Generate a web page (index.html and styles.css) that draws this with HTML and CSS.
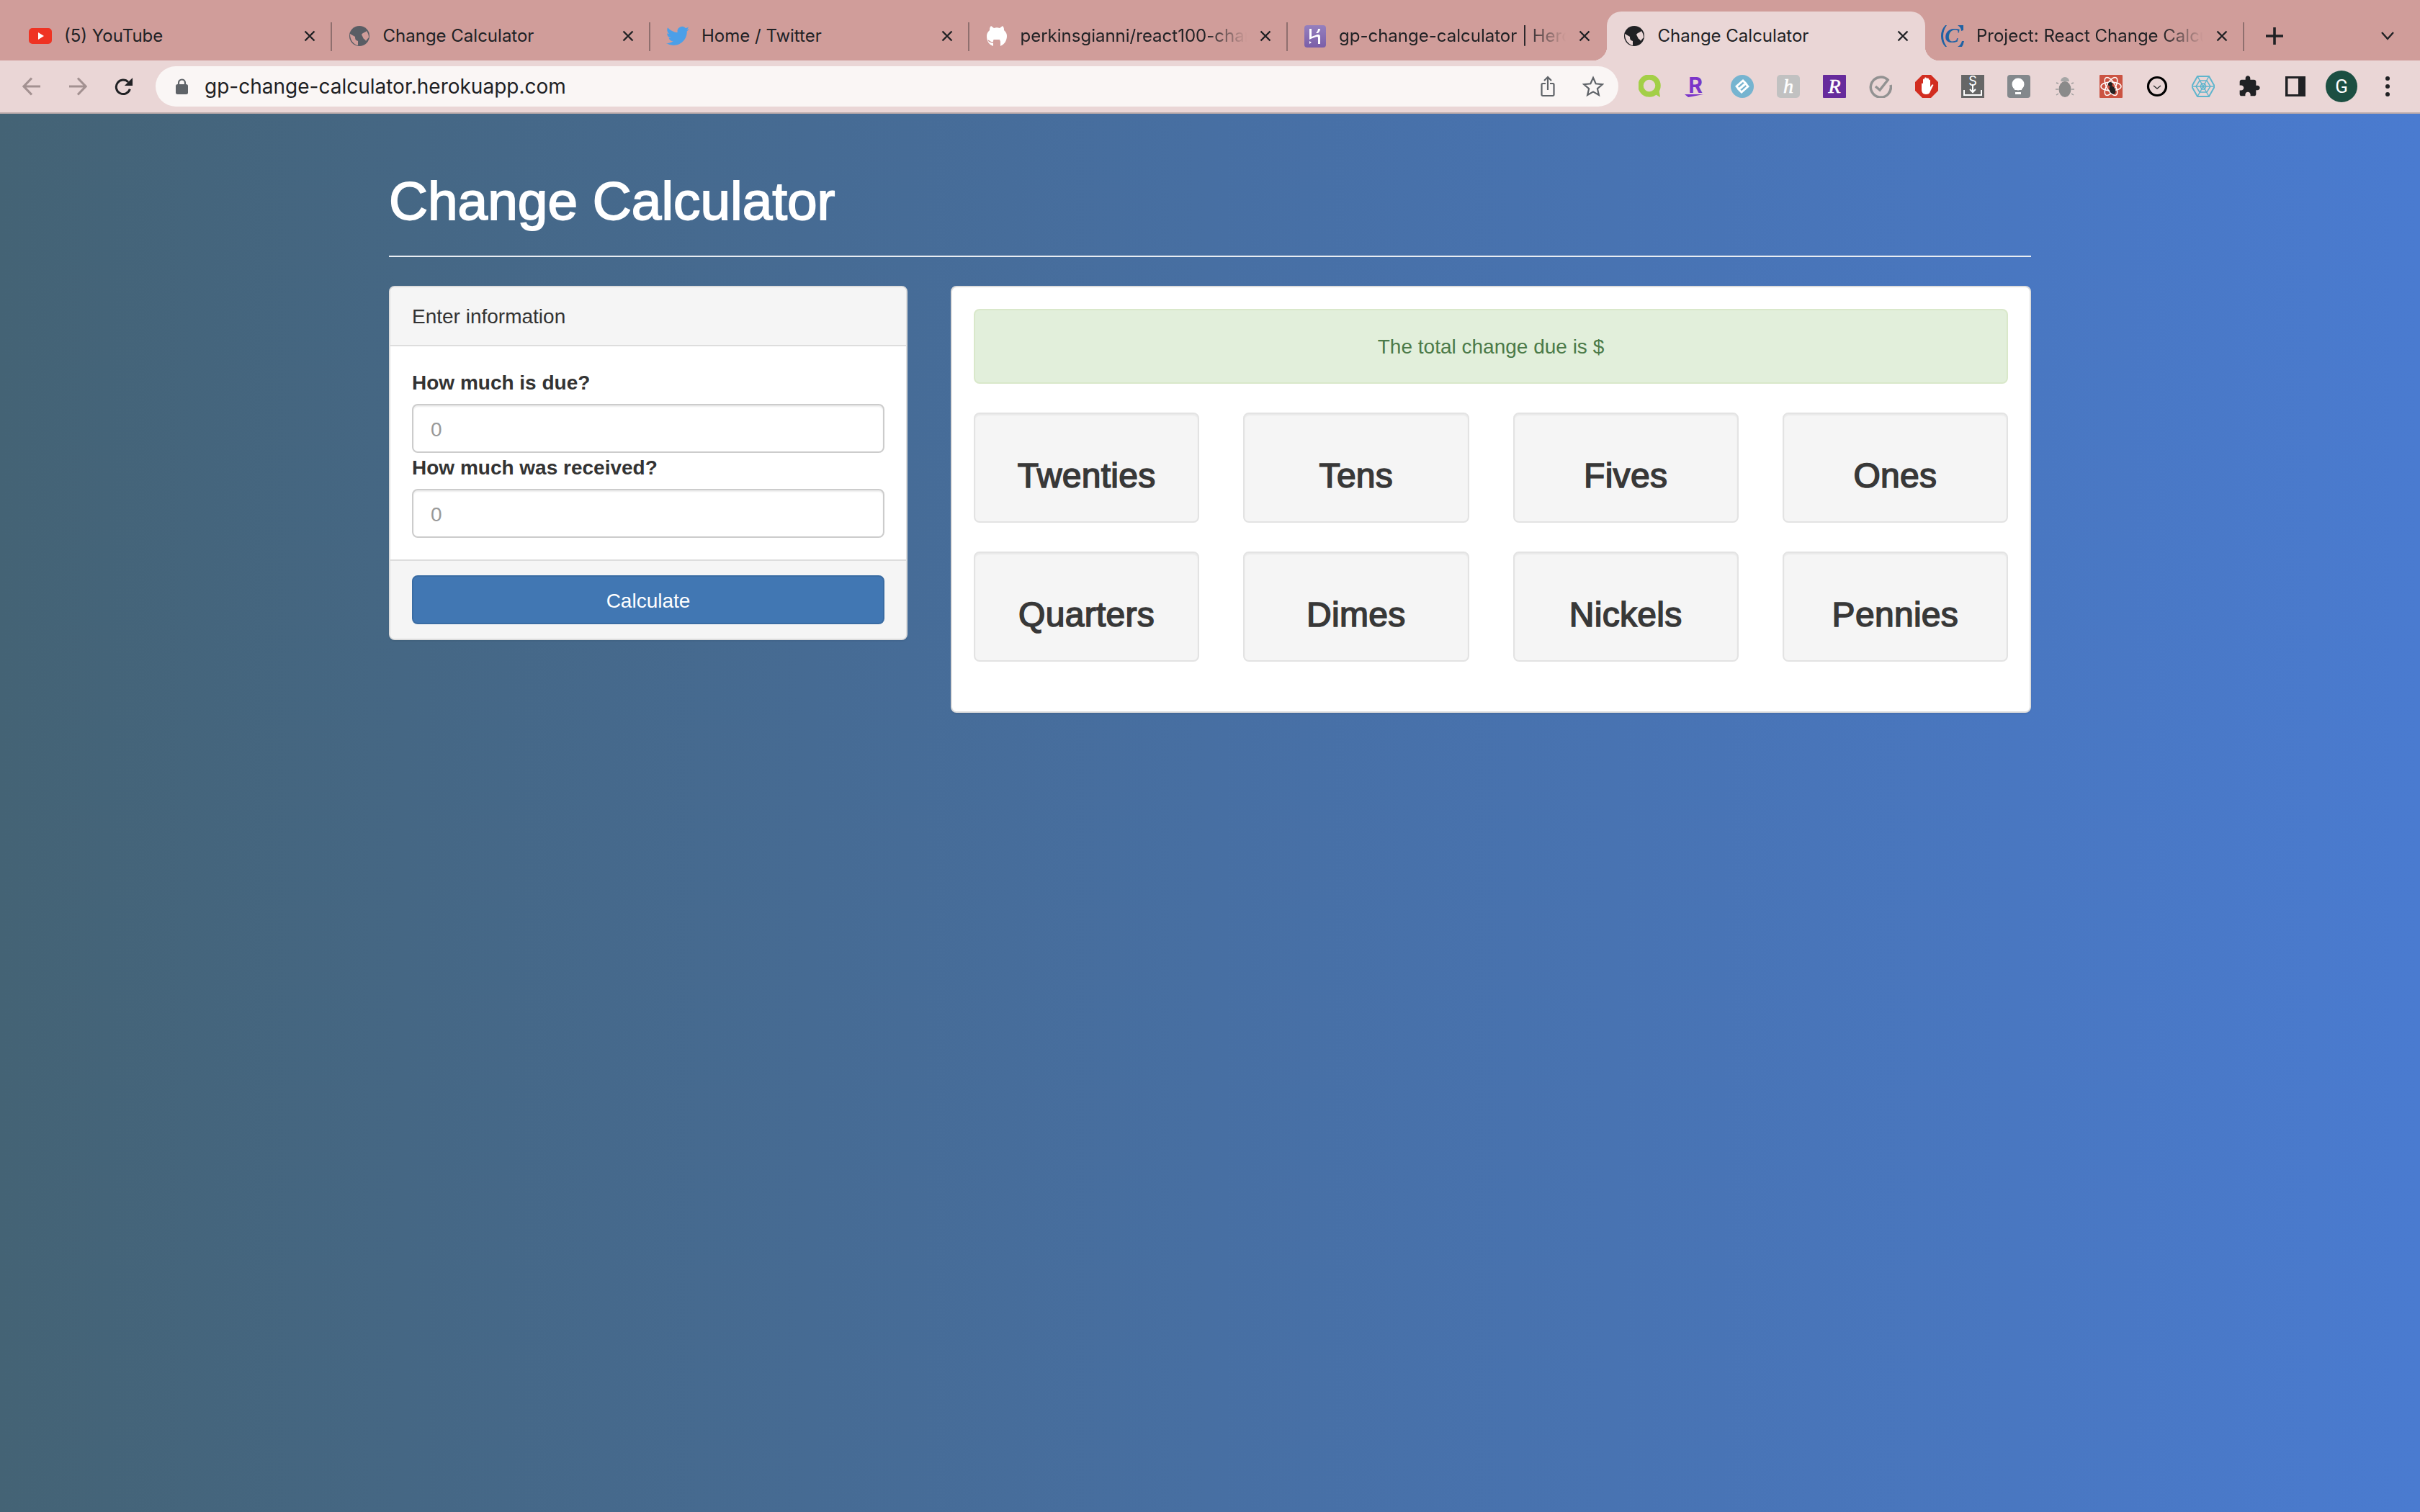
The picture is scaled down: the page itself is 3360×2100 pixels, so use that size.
FILE: index.html
```html
<!DOCTYPE html>
<html lang="en">
<head>
    <meta charset="UTF-8">
    <meta name="viewport" content="width=device-width, initial-scale=1.0">
    <title>Change Calculator</title>
    <link rel="stylesheet" href="styles.css">
</head>
<body>
    <div class="browser">
        <div class="tabs">
            <div class="tab sep">
                <svg class="favicon" viewBox="0 0 32 32"><rect y="5" width="32" height="22" rx="5" fill="#ef3323"/><path d="M13 11l8 5-8 5z" fill="#fff"/></svg>
                <span class="tab-title">(5) YouTube</span>
                <svg class="tab-close" viewBox="0 0 16 16"><path d="M1.5 1.5l13 13M14.5 1.5l-13 13"/></svg>
            </div>
            <div class="tab sep">
                <svg class="favicon" viewBox="0 0 32 32"><circle cx="16" cy="16" r="14" fill="#595d64"/><path d="M3 13l7 4c0 4 1 5 4 6v6C8 28 3 22 3 13zM19 14c2-3 5-3 7-5 2 3 3 6 3 9-1 1-3 3-4 5-1-3-3-2-4-5z" fill="#d09d9a"/></svg>
                <span class="tab-title">Change Calculator</span>
                <svg class="tab-close" viewBox="0 0 16 16"><path d="M1.5 1.5l13 13M14.5 1.5l-13 13"/></svg>
            </div>
            <div class="tab sep">
                <svg class="favicon" viewBox="0 0 24 24"><path fill="#4c9fe8" d="M23.953 4.57a10 10 0 01-2.825.775 4.958 4.958 0 002.163-2.723c-.951.555-2.005.959-3.127 1.184a4.92 4.92 0 00-8.384 4.482C7.69 8.095 4.067 6.13 1.64 3.162a4.822 4.822 0 00-.666 2.475c0 1.71.87 3.213 2.188 4.096a4.904 4.904 0 01-2.228-.616v.06a4.923 4.923 0 003.946 4.827 4.996 4.996 0 01-2.212.085 4.936 4.936 0 004.604 3.417 9.867 9.867 0 01-6.102 2.105c-.39 0-.779-.023-1.17-.067a13.995 13.995 0 007.557 2.209c9.053 0 13.998-7.496 13.998-13.985 0-.21 0-.42-.015-.63A9.935 9.935 0 0024 4.59z"/></svg>
                <span class="tab-title">Home / Twitter</span>
                <svg class="tab-close" viewBox="0 0 16 16"><path d="M1.5 1.5l13 13M14.5 1.5l-13 13"/></svg>
            </div>
            <div class="tab sep">
                <svg class="favicon" viewBox="0 0 32 32"><path d="M8 2l4 3c3-1 5-1 8 0l4-3c2 2 2 4 2 6 3 3 4 5 4 8 0 7-4 12-9 14v-6c0-1-1-2-1-3H12c-1 0-1 2-1 3v6C5 28 2 23 2 16c0-3 1-5 4-8 0-2 0-4 2-6z" fill="#fff"/><path d="M4 22c2 2 4 3 7 3" fill="none" stroke="#d09d9a" stroke-width="1.5"/></svg>
                <span class="tab-title tab-fade">perkinsgianni/react100-change-calculator</span>
                <svg class="tab-close" viewBox="0 0 16 16"><path d="M1.5 1.5l13 13M14.5 1.5l-13 13"/></svg>
            </div>
            <div class="tab">
                <svg class="favicon" viewBox="0 0 32 32"><defs><linearGradient id="herokuBg" x1="0" y1="0" x2="0" y2="1"><stop offset="0" stop-color="#9580be"/><stop offset="1" stop-color="#7a5ea8"/></linearGradient></defs><rect width="30" height="31" x="1" y="1" rx="4" fill="url(#herokuBg)"/><path d="M8 6h3v11c3-1 7-3 9-3 3 0 3 2 3 4v9h-3v-9c0-1-1-1-2-1-3 1-7 2-10 4zM20 6h3c0 2-1 4-3 6h-3c2-2 3-4 3-6zM8 23l3 2-3 2z" fill="#fff"/></svg>
                <span class="tab-title tab-fade">gp-change-calculator | Heroku</span>
                <svg class="tab-close" viewBox="0 0 16 16"><path d="M1.5 1.5l13 13M14.5 1.5l-13 13"/></svg>
            </div>
            <div class="tab active">
                <svg class="favicon" viewBox="0 0 32 32"><circle cx="16" cy="16" r="14" fill="#202124"/><path d="M3 13l7 4c0 4 1 5 4 6v6C8 28 3 22 3 13zM19 14c2-3 5-3 7-5 2 3 3 6 3 9-1 1-3 3-4 5-1-3-3-2-4-5z" fill="#ead6d6"/></svg>
                <span class="tab-title">Change Calculator</span>
                <svg class="tab-close" viewBox="0 0 16 16"><path d="M1.5 1.5l13 13M14.5 1.5l-13 13"/></svg>
            </div>
            <div class="tab sep">
                <svg class="favicon" viewBox="0 0 32 32"><path d="M8 1H6Q0 7 0 16t6 15h2Q3 24 3 16T8 1zM23 1h8v7l-3 1q0-5-5-8zM32 23q-1 5-3 8h-6q5-3 6-8z" fill="#1f62a4"/><text class="logo-c" x="15" y="25">C</text></svg>
                <span class="tab-title tab-fade">Project: React Change Calculator</span>
                <svg class="tab-close" viewBox="0 0 16 16"><path d="M1.5 1.5l13 13M14.5 1.5l-13 13"/></svg>
            </div>
            <div class="new-tab">
                <svg viewBox="0 0 24 24" class="plus"><path d="M12 0v24M0 12h24"/></svg>
            </div>
            <svg viewBox="0 0 18 12" class="tab-menu"><path d="M1 1l8 9 8-9"/></svg>
        </div>

        <div class="toolbar">
            <div class="nav-btn"><svg viewBox="0 0 26 26" class="nav-icon faded"><path d="M25 13H2M13 1.5L2 13l11 11.500"/></svg></div>
            <div class="nav-btn"><svg viewBox="0 0 26 26" class="nav-icon faded"><path d="M1 13h23M13 1.500L24 13 13 24.500"/></svg></div>
            <div class="nav-btn"><svg viewBox="0 0 28 26" class="nav-icon"><path d="M23 17a10.500 10.500 0 1 1-2.500-10.500"/><path class="solid" d="M27 0v12H15z"/></svg></div>
            <div class="omnibox">
                <svg class="lock" viewBox="0 0 17 22"><path d="M4 9V6a4.500 4.500 0 0 1 9 0v3" fill="none" stroke="#5f6368" stroke-width="2.200"/><rect y="8" width="17" height="14" rx="2.500" fill="#5f6368"/></svg>
                <span class="url">gp-change-calculator.herokuapp.com</span>
                <svg class="omni-icon share" viewBox="0 0 24 30"><path d="M7 11H3a1.500 1.500 0 0 0-1.500 1.500v14A1.500 1.500 0 0 0 3 28h14a1.500 1.500 0 0 0 1.500-1.500v-14A1.500 1.500 0 0 0 17 11h-4M10 20V2M5 7l5-5 5 5" transform="translate(2)"/></svg>
                <svg class="omni-icon star" viewBox="0 0 30 30"><path d="M15 3l3.700 8.300 9 .900-6.800 6 2 8.800L15 22.400 7.100 27l2-8.800-6.800-6 9-.900z"/></svg>
            </div>
            <div class="extensions">
                <svg class="ext" viewBox="0 0 32 32"><circle cx="15" cy="15" r="12" fill="none" stroke="#a3cf47" stroke-width="7.500"/><path d="M20 25l10 6-2-13z" fill="#a3cf47"/></svg>
                <svg class="ext" viewBox="0 0 32 32"><text class="ext-r" x="15" y="25">R</text><path d="M0 27h26c-7 1-13 3-21 4z" fill="#7b35c9"/></svg>
                <svg class="ext" viewBox="0 0 32 32"><circle cx="16" cy="16" r="16" fill="#76b4d0"/><path d="M13 22l-5-6 9-8 4 4-8 7M19 10l5 6-9 8-4-4 8-7" fill="none" stroke="#fff" stroke-width="2.800"/></svg>
                <svg class="ext" viewBox="0 0 32 32"><rect width="32" height="32" rx="5" fill="#c1c1c1"/><text class="ext-script" x="16" y="25">h</text></svg>
                <svg class="ext" viewBox="0 0 32 32"><rect width="32" height="32" rx="1" fill="#672b9c"/><text class="ext-script" x="16" y="25">R</text></svg>
                <svg class="ext" viewBox="0 0 32 32"><path d="M27 8a14 14 0 1 0 3 6" fill="none" stroke="#929292" stroke-width="3.500"/><path d="M9 16l6 5 12-15" fill="none" stroke="#929292" stroke-width="3.500"/></svg>
                <svg class="ext" viewBox="0 0 32 32"><path d="M10 0h12l10 10v12L22 32H10L0 22V10z" fill="#d22d20"/><path d="M9 13c0-2 2-2 2 0V7c0-2 2-2 2 0V5c0-2 3-2 3 0v1c0-2 3-2 3 0v2c0-2 2-2 2 0v9l2-3c2-2 3 0 2 1l-4 8c-1 3-3 4-6 4-4 0-6-3-6-6z" fill="#fff"/></svg>
                <svg class="ext" viewBox="0 0 32 32"><rect width="32" height="32" fill="#666"/><text class="ext-s" x="16" y="15">S</text><path d="M4 21v7h24v-7" fill="none" stroke="#fff" stroke-width="2"/><path d="M16 13v11M12 20l4 4 4-4" fill="none" stroke="#fff" stroke-width="2"/></svg>
                <svg class="ext" viewBox="0 0 32 32"><rect width="32" height="32" rx="4" fill="#83888c"/><circle cx="15" cy="13" r="8.500" fill="#fff"/><path d="M10 18h10v3H10zM11 24h8v3h-8z" fill="#fff"/></svg>
                <svg class="ext" viewBox="0 0 32 32"><ellipse cx="16" cy="20" rx="8.500" ry="11" fill="#8a8a8a"/><path d="M10 9a6 6 0 0 1 12 0z" fill="#a6a6a6"/><path d="M7 12l-3-1M25 12l3-1M7 20H3M25 20h4M7 26l-3 2M25 26l3 2" stroke="#9a9a9a" stroke-width="1.500"/></svg>
                <svg class="ext" viewBox="0 0 32 32"><rect width="32" height="32" rx="1" fill="#cb5342"/><g fill="none" stroke="#fff" stroke-width="1.500"><ellipse cx="16" cy="16" rx="14" ry="6"/><ellipse cx="16" cy="16" rx="14" ry="6" transform="rotate(60 16 16)"/><ellipse cx="16" cy="16" rx="14" ry="6" transform="rotate(120 16 16)"/></g><ellipse cx="18" cy="21" rx="4" ry="6" fill="#222" transform="rotate(-25 18 21)"/><circle cx="15" cy="13" r="3" fill="#222"/></svg>
                <svg class="ext" viewBox="0 0 32 32"><circle cx="16" cy="16" r="12.500" fill="none" stroke="#000" stroke-width="3.200"/><path d="M11 15l5 4 5-4" fill="none" stroke="#333" stroke-width="1.400"/></svg>
                <svg class="ext" viewBox="0 0 32 32"><g fill="none" stroke="#5fb5cd" stroke-width="1.500"><path d="M8 2h16l8 14-8 14H8L0 16z" stroke-width="2"/><path d="M11 8h10l5 8-5 8H11l-5-8z"/><path d="M14 12h4l2 4-2 4h-4l-2-4zM8 2l16 28M24 2L8 30M0 16h32"/></g></svg>
                <svg class="ext" viewBox="0 0 24 24"><path fill="#202124" d="M20.500 11H19V7c0-1.100-.9-2-2-2h-4V3.500C13 2.120 11.880 1 10.500 1S8 2.120 8 3.500V5H4c-1.100 0-1.990.9-1.990 2v3.800H3.500c1.490 0 2.700 1.210 2.700 2.700s-1.210 2.700-2.700 2.700H2V20c0 1.100.9 2 2 2h3.800v-1.500c0-1.490 1.210-2.700 2.700-2.700 1.490 0 2.700 1.210 2.700 2.700V22H17c1.100 0 2-.9 2-2v-4h1.500c1.380 0 2.500-1.120 2.500-2.500S21.880 11 20.500 11z"/></svg>
                <svg class="ext" viewBox="0 0 32 32"><path fill-rule="evenodd" d="M2 2h28v28H2zM5.500 5v22H20V5z" fill="#202124"/></svg>
                <div class="avatar">G</div>
                <svg class="ext" viewBox="0 0 32 32"><circle cx="16" cy="5" r="3" fill="#202124"/><circle cx="16" cy="16" r="3" fill="#202124"/><circle cx="16" cy="27" r="3" fill="#202124"/></svg>
            </div>
        </div>
    </div>

    <div class="page">
        <div class="container">
            <h1 class="page-title">Change Calculator</h1>
            <div class="columns">
                <div class="panel">
                    <div class="panel-heading">Enter information</div>
                    <div class="panel-body">
                        <label for="amountDue">How much is due?</label>
                        <input type="number" id="amountDue" placeholder="0">
                        <label for="amountReceived">How much was received?</label>
                        <input type="number" id="amountReceived" placeholder="0">
                    </div>
                    <div class="panel-footer">
                        <button class="btn-calc">Calculate</button>
                    </div>
                </div>

                <div class="panel">
                    <div class="panel-body result">
                        <div class="alert">The total change due is $</div>
                        <div class="wells">
                            <div class="well">Twenties</div>
                            <div class="well">Tens</div>
                            <div class="well">Fives</div>
                            <div class="well">Ones</div>
                            <div class="well">Quarters</div>
                            <div class="well">Dimes</div>
                            <div class="well">Nickels</div>
                            <div class="well">Pennies</div>
                        </div>
                    </div>
                </div>
            </div>
        </div>
    </div>
</body>
</html>
```

FILE: styles.css
```css
* {
    box-sizing: border-box;
}

body {
    margin: 0;
    min-height: 2100px;
    display: flex;
    flex-direction: column;
    font-family: "Liberation Sans", Arial, sans-serif;
    font-size: 28px;
    line-height: 40px;
    color: #333;
}

/* browser chrome */
.browser {
    font-family: Inter, "Liberation Sans", sans-serif;
    color: #202124;
}

.tabs {
    height: 84px;
    padding-left: 18px;
    display: flex;
    align-items: flex-end;
    background-color: #d09d9a;
}

.tab {
    position: relative;
    width: 442.5px;
    height: 68px;
    padding: 0 23px 0 22px;
    display: flex;
    align-items: center;
    flex-shrink: 0;
}

.tab.sep::after {
    content: "";
    position: absolute;
    right: 0;
    top: 15px;
    height: 40px;
    width: 2px;
    background-color: #8f6f6e;
}

.tab.active {
    background-color: #ead6d6;
    border-radius: 20px 20px 0 0;
}

.tab.active::before,
.tab.active::after {
    content: "";
    position: absolute;
    bottom: 0;
    width: 20px;
    height: 20px;
}

.tab.active::before {
    left: -20px;
    background: radial-gradient(circle at 0 0, transparent 20px, #ead6d6 20.5px);
}

.tab.active::after {
    right: -20px;
    background: radial-gradient(circle at 100% 0, transparent 20px, #ead6d6 20.5px);
}

.favicon {
    width: 32px;
    height: 32px;
    flex-shrink: 0;
}

.tab-title {
    flex: 1;
    min-width: 0;
    margin: 0 18px 0 17px;
    font-size: 24px;
    line-height: 32px;
    white-space: nowrap;
    overflow: hidden;
}

.tab-fade {
    -webkit-mask-image: linear-gradient(to right, #000 82%, transparent 100%);
    mask-image: linear-gradient(to right, #000 82%, transparent 100%);
}

.tab-close {
    width: 16px;
    height: 16px;
    flex-shrink: 0;
    fill: none;
    stroke: #202124;
    stroke-width: 2.4;
}

.logo-c {
    font-family: "Liberation Serif", serif;
    font-size: 30px;
    font-weight: bold;
    font-style: italic;
    text-anchor: middle;
    fill: #1f62a4;
}

.new-tab {
    width: 60px;
    height: 68px;
    margin-left: 12px;
    display: flex;
    align-items: center;
    justify-content: center;
}

.plus {
    width: 24px;
    height: 24px;
    fill: none;
    stroke: #202124;
    stroke-width: 3.6;
}

.tab-menu {
    width: 18px;
    height: 12px;
    margin: 0 0 28px 118px;
    fill: none;
    stroke: #202124;
    stroke-width: 2.4;
}

.toolbar {
    height: 74px;
    padding: 8px 0 8px 12px;
    display: flex;
    align-items: center;
    background-color: #ead6d6;
    border-bottom: 2px solid #bcabab;
}

.nav-btn {
    width: 64px;
    display: flex;
    justify-content: center;
}

.nav-icon {
    width: 26px;
    height: 26px;
    fill: none;
    stroke: #202124;
    stroke-width: 3.2;
}

.nav-icon.faded {
    stroke: #a39191;
}

.nav-icon .solid {
    fill: #202124;
    stroke: none;
}

.omnibox {
    width: 2031px;
    height: 56px;
    margin-left: 12px;
    padding: 0 20px 0 28px;
    display: flex;
    align-items: center;
    background-color: #faf6f5;
    border-radius: 28px;
}

.lock {
    width: 17px;
    height: 22px;
    flex-shrink: 0;
}

.url {
    flex: 1;
    margin-left: 23px;
    font-size: 28px;
}

.omni-icon {
    fill: none;
    stroke: #5f6368;
    stroke-width: 2.2;
}

.share {
    width: 24px;
    height: 30px;
}

.star {
    width: 30px;
    height: 30px;
    margin-left: 36px;
}

.extensions {
    margin-left: 28px;
    display: flex;
    align-items: center;
    gap: 32px;
}

.ext {
    width: 32px;
    height: 32px;
    flex-shrink: 0;
}

.ext-r {
    font-size: 30px;
    font-weight: bold;
    text-anchor: middle;
    fill: #7b35c9;
}

.ext-script {
    font-family: "Liberation Serif", serif;
    font-size: 28px;
    font-style: italic;
    text-anchor: middle;
    fill: #fff;
    stroke: #fff;
    stroke-width: 0.6;
}

.ext-s {
    font-size: 18px;
    text-anchor: middle;
    fill: #fff;
}

.avatar {
    width: 44px;
    height: 44px;
    margin: 0 -6px;
    border-radius: 50%;
    background-color: #1c4f42;
    color: #fff;
    font-family: Roboto, sans-serif;
    font-size: 26px;
    line-height: 44px;
    text-align: center;
}

/* page */
.page {
    flex: 1;
    background: linear-gradient(to right, #446375, #4a7bd0);
}

.container {
    width: 2280px;
    margin: 0 auto;
    padding-top: 81px;
}

.page-title {
    margin: 0 0 40px;
    padding-bottom: 36px;
    border-bottom: 2px solid #e8edf3;
    color: #fff;
    font-size: 74.8px;
    font-weight: normal;
    line-height: 80px;
    -webkit-text-stroke: 1.8px #fff;
}

.columns {
    display: grid;
    grid-template-columns: 720px 1500px;
    column-gap: 60px;
    align-items: start;
}

.panel {
    background-color: #fff;
    border: 2px solid #ddd;
    border-radius: 8px;
    box-shadow: 0 2px 2px rgba(0, 0, 0, 0.05);
}

.panel-heading {
    padding: 21px 30px 19px;
    background-color: #f5f5f5;
    border-bottom: 2px solid #ddd;
    border-radius: 6px 6px 0 0;
}

.panel-body {
    padding: 30px;
}

.panel-footer {
    padding: 20px 30px;
    background-color: #f5f5f5;
    border-top: 2px solid #ddd;
    border-radius: 0 0 6px 6px;
}

label {
    display: block;
    padding-top: 1px;
    margin-bottom: 9px;
    font-weight: bold;
}

input {
    display: block;
    width: 100%;
    height: 68px;
    padding: 14px 24px 10px;
    font-family: inherit;
    font-size: 28px;
    color: #555;
    border: 2px solid #ccc;
    border-radius: 8px;
    box-shadow: inset 0 2px 2px rgba(0, 0, 0, 0.075);
}

input::placeholder {
    color: #999;
}

.btn-calc {
    display: block;
    width: 100%;
    height: 68px;
    padding-top: 4px;
    font-family: inherit;
    font-size: 28px;
    color: #fff;
    background-color: #4177b3;
    border: 2px solid #3a6ca3;
    border-radius: 8px;
}

.alert {
    padding: 31px 30px 29px;
    margin-bottom: 40px;
    text-align: center;
    color: #4b7a48;
    background-color: #e2efdb;
    border: 2px solid #d9e8ca;
    border-radius: 8px;
}

.wells {
    display: grid;
    grid-template-columns: repeat(4, 1fr);
    gap: 40px 61px;
    margin-bottom: 39px;
}

.well {
    height: 153px;
    padding-top: 59px;
    text-align: center;
    font-size: 48px;
    line-height: 53px;
    letter-spacing: 0.3px;
    color: #383838;
    -webkit-text-stroke: 1.6px #383838;
    background-color: #f5f5f5;
    border: 2px solid #e3e3e3;
    border-radius: 8px;
    box-shadow: inset 0 2px 2px rgba(0, 0, 0, 0.05);
}
```
